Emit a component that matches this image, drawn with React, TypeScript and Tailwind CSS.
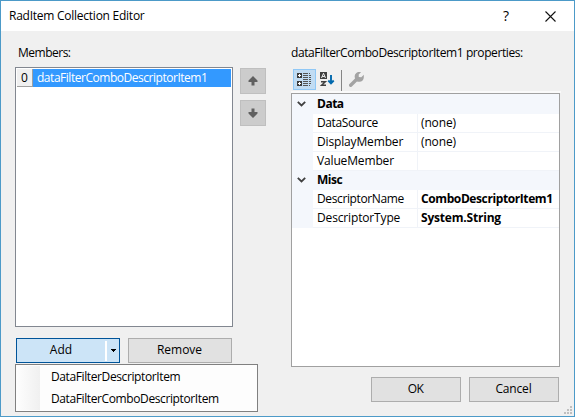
import React from "react";

const font = "font-['Open_Sans','Noto_Sans',sans-serif]";

function Row({ name, value = "", nameClass = "tracking-[-0.15px]", valueClass = "tracking-[-0.15px]" }: { name: string; value?: string; nameClass?: string; valueClass?: string }) {
  return (
    <div className="flex h-[19px] leading-[18px]">
      <div className="w-[21px] bg-[#f4f7fc]" />
      <div className={"w-[105px] border-b border-r border-[#f0f3f8] pl-1 " + nameClass}>{name}</div>
      <div className={"flex-1 border-b border-[#f0f3f8] pl-[3px] " + valueClass}>{value}</div>
    </div>
  );
}

function Category({ name, tall = false }: { name: string; tall?: boolean }) {
  return (
    <div className={"flex bg-[#f4f7fc] font-bold leading-[18px] tracking-[-0.5px] " + (tall ? "h-5 pt-px" : "h-[19px]")}>
      <svg className="ml-[5px] mr-[11px] mt-[6px]" width="9" height="6" viewBox="0 0 9 6" fill="none">
        <path d="M.8 .8 4.5 4.4 8.2 .8" stroke="#404040" strokeWidth="1.8" />
      </svg>
      {name}
    </div>
  );
}

function MoveButton({ down = false }: { down?: boolean }) {
  return (
    <button className="flex h-[26px] w-[26px] items-center justify-center border border-[#bfbfbf] bg-[#cccccc]">
      <svg className={down ? "rotate-180" : ""} width="10" height="10" viewBox="0 0 10 10">
        <path d="M5 0 9.5 4.5V6H6.5V9.5H3.5V6H.5V4.5Z" fill="#606060" />
      </svg>
    </button>
  );
}

function PlainButton({ label, className }: { label: string; className: string }) {
  return (
    <button className={"flex h-[25px] items-center justify-center border border-[#adadad] bg-[#e1e1e1] pb-px pr-px " + className}>
      {label}
    </button>
  );
}

export default function App() {
  return (
    <div className={"flex h-[417px] w-[575px] flex-col overflow-hidden border border-[#4c9ac8] bg-[#f0f0f0] text-[12px] leading-4 text-black " + font}>
      <header className="flex h-[30px] shrink-0 items-center bg-white pl-2 pr-[18px]">
        <h1 className="flex-1 tracking-[-0.25px]">RadItem Collection Editor</h1>
        <span className="mr-[36px] text-[14px]">?</span>
        <svg width="11" height="11" viewBox="0 0 11 11" fill="none" stroke="#111" strokeWidth="1.1">
          <path d="M.5 .5 10.5 10.5M10.5 .5 .5 10.5" />
        </svg>
      </header>
      <div className="flex flex-1">
        <section className="w-[243px] pl-[14px] pt-[14px]">
          <div className="h-[22px] pl-[3px] tracking-[-0.5px]">Members:</div>
          <div className="h-[260px] w-[218px] border border-[#828790] bg-white p-px">
            <div className="flex h-[18px]">
              <div className="h-[18px] w-4 border-b border-r border-[#a0a0a0] bg-[#f0f0f0] text-center leading-[17px]">0</div>
              <div className="flex-1 bg-[#3399ff] pl-1 leading-[18px] tracking-[-0.47px] text-white">dataFilterComboDescriptorItem1</div>
            </div>
          </div>
          <div className="mt-[11px] flex gap-2 pl-px">
            <button className="flex h-[25px] w-[104px] border border-[#005499] bg-[#cce4f7]">
              <span className="flex-1 pt-[3px]">Add</span>
              <span className="mt-[2px] h-5 w-[2px] bg-white" />
              <span className="flex h-full w-3 items-center justify-center">
                <svg width="5" height="3" viewBox="0 0 5 3" shapeRendering="crispEdges"><path d="M0 0H5V1H4V2H3V3H2V2H1V1H0Z" /></svg>
              </span>
            </button>
            <PlainButton label="Remove" className="w-[104px]" />
          </div>
          <div className="mt-px flex h-12 w-[243px] border border-[#808080] bg-[#fdfdfd] p-px">
            <div className="h-full w-[23px] bg-linear-to-r from-[#fdfdfd] to-[#f0f0f0]" />
            <div className="pl-[11px] leading-[22px] tracking-[-0.39px]">
              <div>DataFilterDescriptorItem</div>
              <div>DataFilterComboDescriptorItem</div>
            </div>
          </div>
        </section>
        <div className="-ml-1 flex w-[26px] flex-col gap-[6px] pt-[37px]">
          <MoveButton />
          <MoveButton down />
        </div>
        <section className="ml-[25px] w-[270px] pt-[14px]">
          <div className="h-[23px] whitespace-nowrap tracking-[-0.41px]">dataFilterComboDescriptorItem1 properties:</div>
          <div className="flex h-[23px] items-start pl-[2px]">
            <div className="mt-px flex h-[21px] w-[23px] items-center justify-center border border-[#90c8f6] bg-[#c1dcf3]">
              <svg width="15" height="15" viewBox="0 0 15 15" shapeRendering="crispEdges">
                <path d="M0 1H5V6H0ZM0 9H5V14H0Z" fill="#3d3d3d" />
                <path d="M2 2h1v1h1v1H3v1H2V4H1V3h1ZM2 10h1v1h1v1H3v1H2v-1H1v-1h1Z" fill="#fff" />
                <path d="M6 1h5v1H6ZM6 3h5v1H6ZM6 5h5v1H6ZM6 9h5v1H6ZM6 11h5v1H6ZM6 13h5v1H6ZM12 1h1v1h-1ZM12 3h2v1h-2ZM12 5h2v1h-2ZM12 7h2v1h-2ZM12 9h2v1h-2ZM12 11h2v1h-2ZM12 13h1v1h-1ZM6 7h5v1H6Z" fill="#555" />
              </svg>
            </div>
            <svg className="ml-1 mt-1" width="15" height="15" viewBox="0 0 15 15">
              <path d="M0 0H7V7H0Z" fill="#404040" />
              <path d="M1.5 6 3.5 1.3 5.5 6M2.3 4.5H4.7" stroke="#fff" strokeWidth=".9" fill="none" />
              <path d="M1 9.7H5.3L1.5 13.3H6" stroke="#404040" strokeWidth="1.5" fill="none" />
              <path d="M11 3V11M8.3 8.5 11 11.4 13.7 8.5" stroke="#0068ad" strokeWidth="1.9" fill="none" />
            </svg>
            <div className="ml-[6px] mt-[2px] h-[21px] w-px bg-[#858585]" />
            <svg className="ml-[7px] mt-1" width="15" height="15" viewBox="0 0 15 15">
              <path d="M1.7 13.3 8.5 6.5" stroke="#a3a3a3" strokeWidth="3.4" strokeLinecap="round" />
              <path d="M12 .2A4.6 4.6 0 0 0 5.8 5.5 4.5 4.5 0 0 0 14.8 5.2V2.8L12.3 5.2 9.8 4.9 9.7 2.6Z" fill="#a3a3a3" />
            </svg>
          </div>
          <div className="h-[2px] bg-[#fafafa]" />
          <div className="h-[274px] w-[269px] border border-[#a0a0a0] bg-white">
            <Category name="Data" tall />
            <Row name="DataSource" value="(none)" nameClass="tracking-[-0.4px]" />
            <Row name="DisplayMember" value="(none)" />
            <Row name="ValueMember" />
            <Category name="Misc" />
            <Row name="DescriptorName" value="ComboDescriptorItem1" nameClass="tracking-[-0.38px]" valueClass="font-bold tracking-[-0.4px]" />
            <Row name="DescriptorType" value="System.String" valueClass="font-bold tracking-[-0.2px]" />
          </div>
          <div className="mt-[10px] flex gap-2 pl-[80px]">
            <PlainButton label="OK" className="w-[90px] tracking-[-0.5px]" />
            <PlainButton label="Cancel" className="w-[90px] shrink-0 tracking-[-0.15px]" />
          </div>
        </section>
        <svg className="mb-[2px] ml-[3px] self-end" width="8" height="8" viewBox="0 0 8 8" fill="#bfbfbf">
          <path d="M6 0h2v2H6ZM3 3h2v2H3ZM6 3h2v2H6ZM0 6h2v2H0ZM3 6h2v2H3ZM6 6h2v2H6Z" />
        </svg>
      </div>
    </div>
  );
}
